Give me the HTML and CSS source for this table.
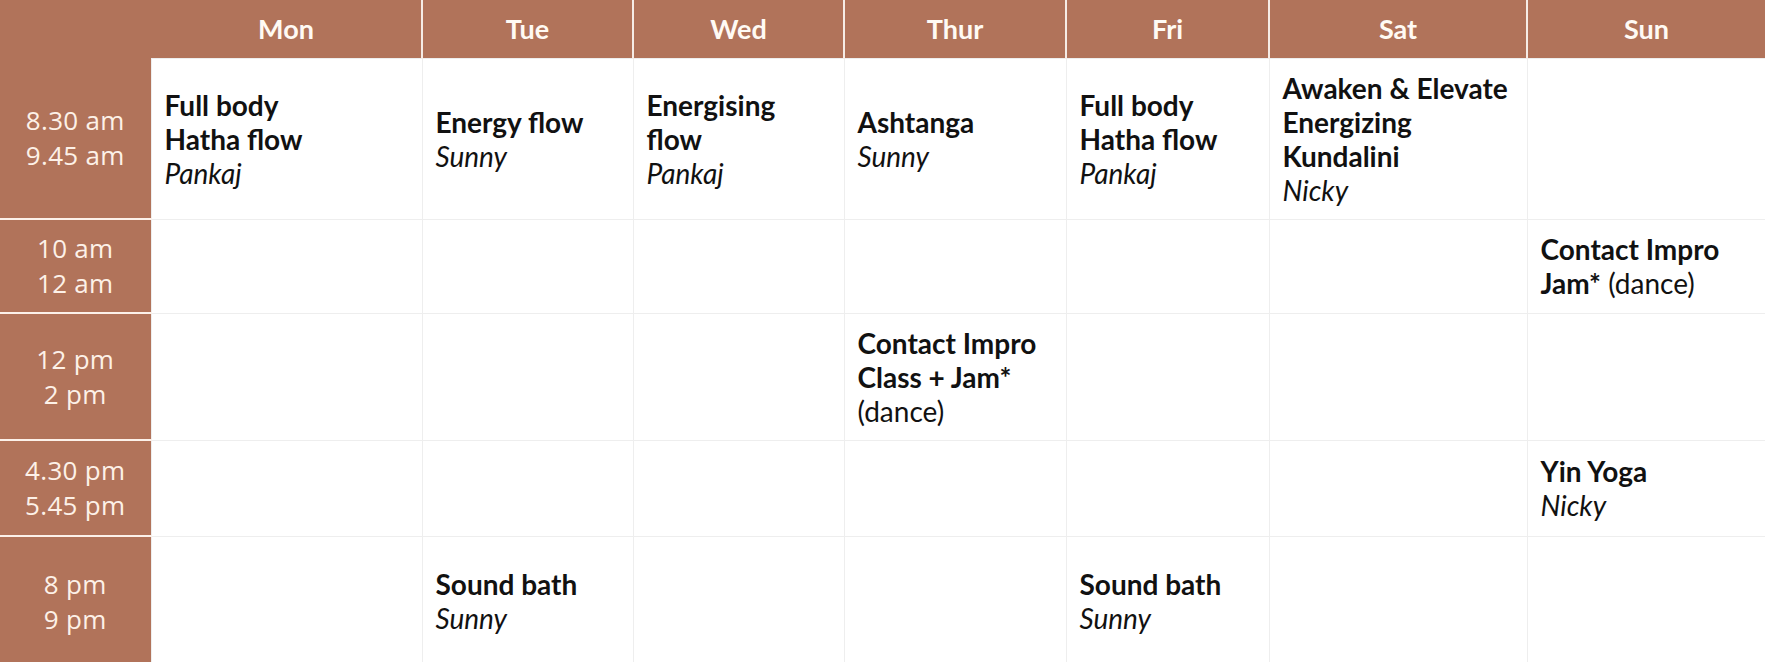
FILE: index.html
```html
<!DOCTYPE html>
<html lang="en">
<head>
<meta charset="utf-8">
<title>Weekly schedule</title>
<link rel="stylesheet" href="styles.css">
</head>
<body>
<table class="schedule">
  <colgroup>
    <col class="c-time">
    <col class="c-mon">
    <col class="c-tue">
    <col class="c-wed">
    <col class="c-thu">
    <col class="c-fri">
    <col class="c-sat">
    <col class="c-sun">
  </colgroup>
  <thead>
    <tr class="r-head">
      <th class="corner"></th>
      <th class="day first">Mon</th>
      <th class="day">Tue</th>
      <th class="day">Wed</th>
      <th class="day">Thur</th>
      <th class="day">Fri</th>
      <th class="day">Sat</th>
      <th class="day">Sun</th>
    </tr>
  </thead>
  <tbody>
    <tr class="r1">
      <th class="time">8.30 am<br>9.45 am</th>
      <td><b>Full body<br>Hatha flow</b><br><i>Pankaj</i></td>
      <td><b>Energy flow</b><br><i>Sunny</i></td>
      <td><b>Energising<br>flow</b><br><i>Pankaj</i></td>
      <td><b>Ashtanga</b><br><i>Sunny</i></td>
      <td><b>Full body<br>Hatha flow</b><br><i>Pankaj</i></td>
      <td><b>Awaken &amp; Elevate<br>Energizing<br>Kundalini</b><br><i>Nicky</i></td>
      <td></td>
    </tr>
    <tr class="r2">
      <th class="time">10 am<br>12 am</th>
      <td></td><td></td><td></td><td></td><td></td><td></td>
      <td><b>Contact Impro<br>Jam*</b> (dance)</td>
    </tr>
    <tr class="r3">
      <th class="time">12 pm<br>2 pm</th>
      <td></td><td></td><td></td>
      <td><b>Contact Impro<br>Class + Jam*</b><br>(dance)</td>
      <td></td><td></td><td></td>
    </tr>
    <tr class="r4">
      <th class="time">4.30 pm<br>5.45 pm</th>
      <td></td><td></td><td></td><td></td><td></td><td></td>
      <td><b>Yin Yoga</b><br><i>Nicky</i></td>
    </tr>
    <tr class="r5">
      <th class="time">8 pm<br>9 pm</th>
      <td></td>
      <td><b>Sound bath</b><br><i>Sunny</i></td>
      <td></td><td></td>
      <td><b>Sound bath</b><br><i>Sunny</i></td>
      <td></td><td></td>
    </tr>
  </tbody>
</table>
</body>
</html>
```

FILE: styles.css
```css
html, body {
  margin: 0;
  padding: 0;
  background: #ffffff;
}

.schedule {
  width: 1765px;
  table-layout: fixed;
  border-collapse: collapse;
  font-family: "Lato", "Liberation Sans", sans-serif;
  color: #111111;
}

.c-time { width: 151px; }
.c-mon { width: 271px; }
.c-tue { width: 211px; }
.c-wed { width: 211px; }
.c-thu { width: 222px; }
.c-fri { width: 203px; }
.c-sat { width: 258px; }
.c-sun { width: 238px; }

.r-head { height: 58px; }
.r1 { height: 161px; }
.r2 { height: 94px; }
.r3 { height: 127px; }
.r4 { height: 96px; }
.r5 { height: 130px; }

.day {
  background: #b1735a;
  color: #fffaf4;
  font-weight: 700;
  font-size: 27px;
  text-align: center;
  padding: 0;
  border-left: 2px solid #f6ece6;
}

.day.first { border-left: none; }

.corner {
  background: #b1735a;
  padding: 0;
}

.time {
  background: #b1735a;
  color: #fdf1e8;
  font-family: "Open Sans", "Noto Sans", sans-serif;
  font-weight: 400;
  font-size: 26px;
  letter-spacing: 0.3px;
  line-height: 35px;
  text-align: center;
  padding: 0;
  border-top: 2px solid #fcf1ea;
}

.r1 .time { border-top: none; }

td {
  font-size: 28px;
  line-height: 34px;
  padding: 12px 8px 12px 13px;
  vertical-align: middle;
  border: 1px solid #eeeeee;
}

td b { font-weight: 700; }
td i { font-style: italic; font-weight: 400; }
```
